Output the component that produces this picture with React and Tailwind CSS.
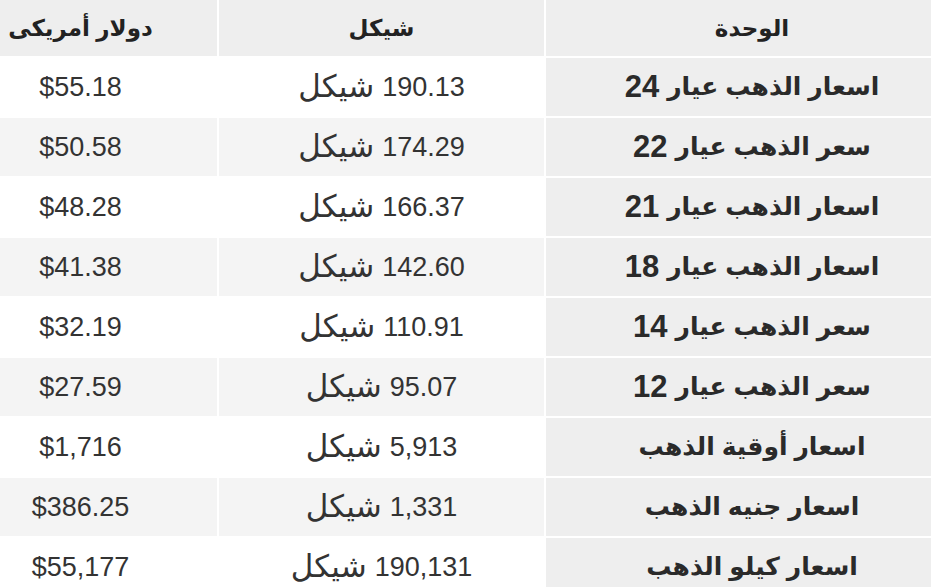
const rows = [
  ["اسعار الذهب عيار", "24", "190.13", "$55.18"],
  ["سعر الذهب عيار", "22", "174.29", "$50.58"],
  ["اسعار الذهب عيار", "21", "166.37", "$48.28"],
  ["اسعار الذهب عيار", "18", "142.60", "$41.38"],
  ["سعر الذهب عيار", "14", "110.91", "$32.19"],
  ["سعر الذهب عيار", "12", "95.07", "$27.59"],
  ["اسعار أوقية الذهب", "", "5,913", "$1,716"],
  ["اسعار جنيه الذهب", "", "1,331", "$386.25"],
  ["اسعار كيلو الذهب", "", "190,131", "$55,177"],
];

const App = () => {
  return (
    <div className="h-[587px] w-[931px] overflow-hidden bg-white">
      <div
        dir="rtl"
        className="ml-[-56px] grid w-[1014px] grid-cols-[412px_325px_273px] auto-rows-[58px] gap-[2px] text-[#333]"
        style={{ fontFamily: '"Liberation Sans", "DejaVu Sans", sans-serif', gridTemplateRows: "56px" }}
      >
        {["الوحدة", "شيكل", "دولار أمريكى"].map((h) => (
          <div key={h} className="flex items-center justify-center bg-[#eeeeee] text-[23px] font-bold text-[#222]">
            {h}
          </div>
        ))}
        {rows.map(([label, karat, ils, usd], i) => (
          <div key={i} className="contents">
            <div className="flex items-center justify-center gap-[8px] bg-[#eeeeee] font-bold text-[#2a2a2a]">
              <span className="text-[25px]">{label}</span>
              {karat && <span className="text-[31px]">{karat}</span>}
            </div>
            <div className={`flex items-center justify-center gap-[8px] ${i % 2 ? "bg-[#f4f4f4]" : "bg-white"}`}>
              <span className="text-[27px]">{ils}</span>
              <span className="text-[31px]">شيكل</span>
            </div>
            <div className={`flex items-center justify-center text-[27px] ${i % 2 ? "bg-[#f4f4f4]" : "bg-white"}`}>
              <span dir="ltr">{usd}</span>
            </div>
          </div>
        ))}
      </div>
    </div>
  );
};

export default App;
